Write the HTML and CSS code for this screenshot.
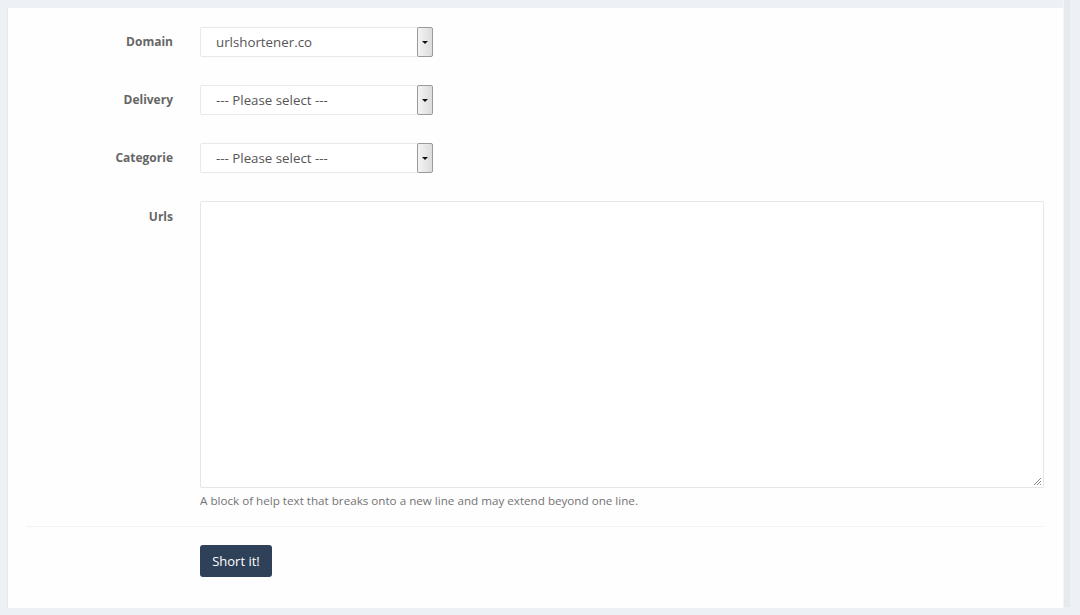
FILE: index.html
```html
<!DOCTYPE html>
<html>
<head>
<meta charset="utf-8">
<link rel="stylesheet" href="styles.css">
</head>
<body>
<div class="page">
  <form class="panel">
    <div class="row">
      <label class="label">Domain</label>
      <div class="control">
        <div class="select"><span class="value">urlshortener.co</span><span class="arrow"><i></i></span></div>
      </div>
    </div>
    <div class="row">
      <label class="label">Delivery</label>
      <div class="control">
        <div class="select"><span class="value">--- Please select ---</span><span class="arrow"><i></i></span></div>
      </div>
    </div>
    <div class="row">
      <label class="label">Categorie</label>
      <div class="control">
        <div class="select"><span class="value">--- Please select ---</span><span class="arrow"><i></i></span></div>
      </div>
    </div>
    <div class="row row-text">
      <label class="label">Urls</label>
      <div class="control">
        <div class="textarea">
          <svg class="grip" width="9" height="9" viewBox="0 0 9 9"><path d="M8 1L1 8M8 4L4 8M8 7L7 8" stroke="#888" stroke-width="1"/></svg>
        </div>
        <p class="help">A block of help text that breaks onto a new line and may extend beyond one line.</p>
      </div>
    </div>
    <div class="sep"></div>
    <div class="row row-btn">
      <div class="label"></div>
      <div class="control"><button type="button" class="btn">Short it!</button></div>
    </div>
  </form>
  <div class="side"></div>
</div>
</body>
</html>
```

FILE: styles.css
```css
html, body {
  margin: 0;
  padding: 0;
}
body {
  background: #edf0f4;
  font-family: "Open Sans", "Liberation Sans", sans-serif;
  width: 1080px;
  height: 615px;
  overflow: hidden;
}
.page {
  display: flex;
  padding: 8px 0 0 7px;
}
.panel {
  width: 1056px;
  height: 600px;
  box-sizing: border-box;
  background: #fefefe;
  border-left: 1px solid #e6e9ed;
  padding: 19px 19px 0 0;
  margin: 0;
}
.side {
  width: 6px;
  height: 607px;
  margin-top: -8px;
  background: #e6e9ee;
  border-left: 1px solid #f2f4f7;
}
.row {
  display: grid;
  grid-template-columns: 165px 1fr;
  column-gap: 27px;
  margin-bottom: 28px;
}
.label {
  text-align: right;
  font-weight: 700;
  font-size: 12px;
  color: #666;
  line-height: 16px;
  padding-top: 7px;
}
.select {
  width: 233px;
  height: 30px;
  box-sizing: border-box;
  border: 1px solid #e8e8e8;
  border-radius: 2px;
  display: flex;
  align-items: center;
  justify-content: space-between;
  background: #fff;
}
.value {
  padding-left: 15px;
  font-size: 13.3px;
  color: #555;
}
.arrow {
  width: 16px;
  height: 30px;
  margin-right: -1px;
  box-sizing: border-box;
  border: 1px solid #9a9a9a;
  border-radius: 2px;
  background: linear-gradient(to right, #f4f4f4, #dcdcdc);
  display: flex;
  align-items: center;
  justify-content: center;
}
.arrow i {
  width: 0;
  height: 0;
  border-left: 3px solid transparent;
  border-right: 3px solid transparent;
  border-top: 3px solid #111;
}
.row-text {
  margin-bottom: 0;
}
.row-text .label {
  padding-top: 8px;
}
.textarea {
  height: 287px;
  box-sizing: border-box;
  border: 1px solid #e6e6e6;
  border-radius: 2px;
  background: #fff;
  position: relative;
}
.grip {
  position: absolute;
  right: 1px;
  bottom: 1px;
}
.help {
  margin: 5px 0 0;
  font-size: 11.65px;
  color: #737373;
  line-height: 16px;
}
.sep {
  height: 1px;
  background: #f3f3f3;
  margin: 17px 0 18px 18px;
}
.row-btn {
  margin-bottom: 0;
}
.btn {
  width: 72px;
  height: 32px;
  background: #2f4158;
  color: #fff;
  border: none;
  border-radius: 3px;
  font-family: "Open Sans", "Liberation Sans", sans-serif;
  font-size: 13px;
  padding: 0;
}
```
